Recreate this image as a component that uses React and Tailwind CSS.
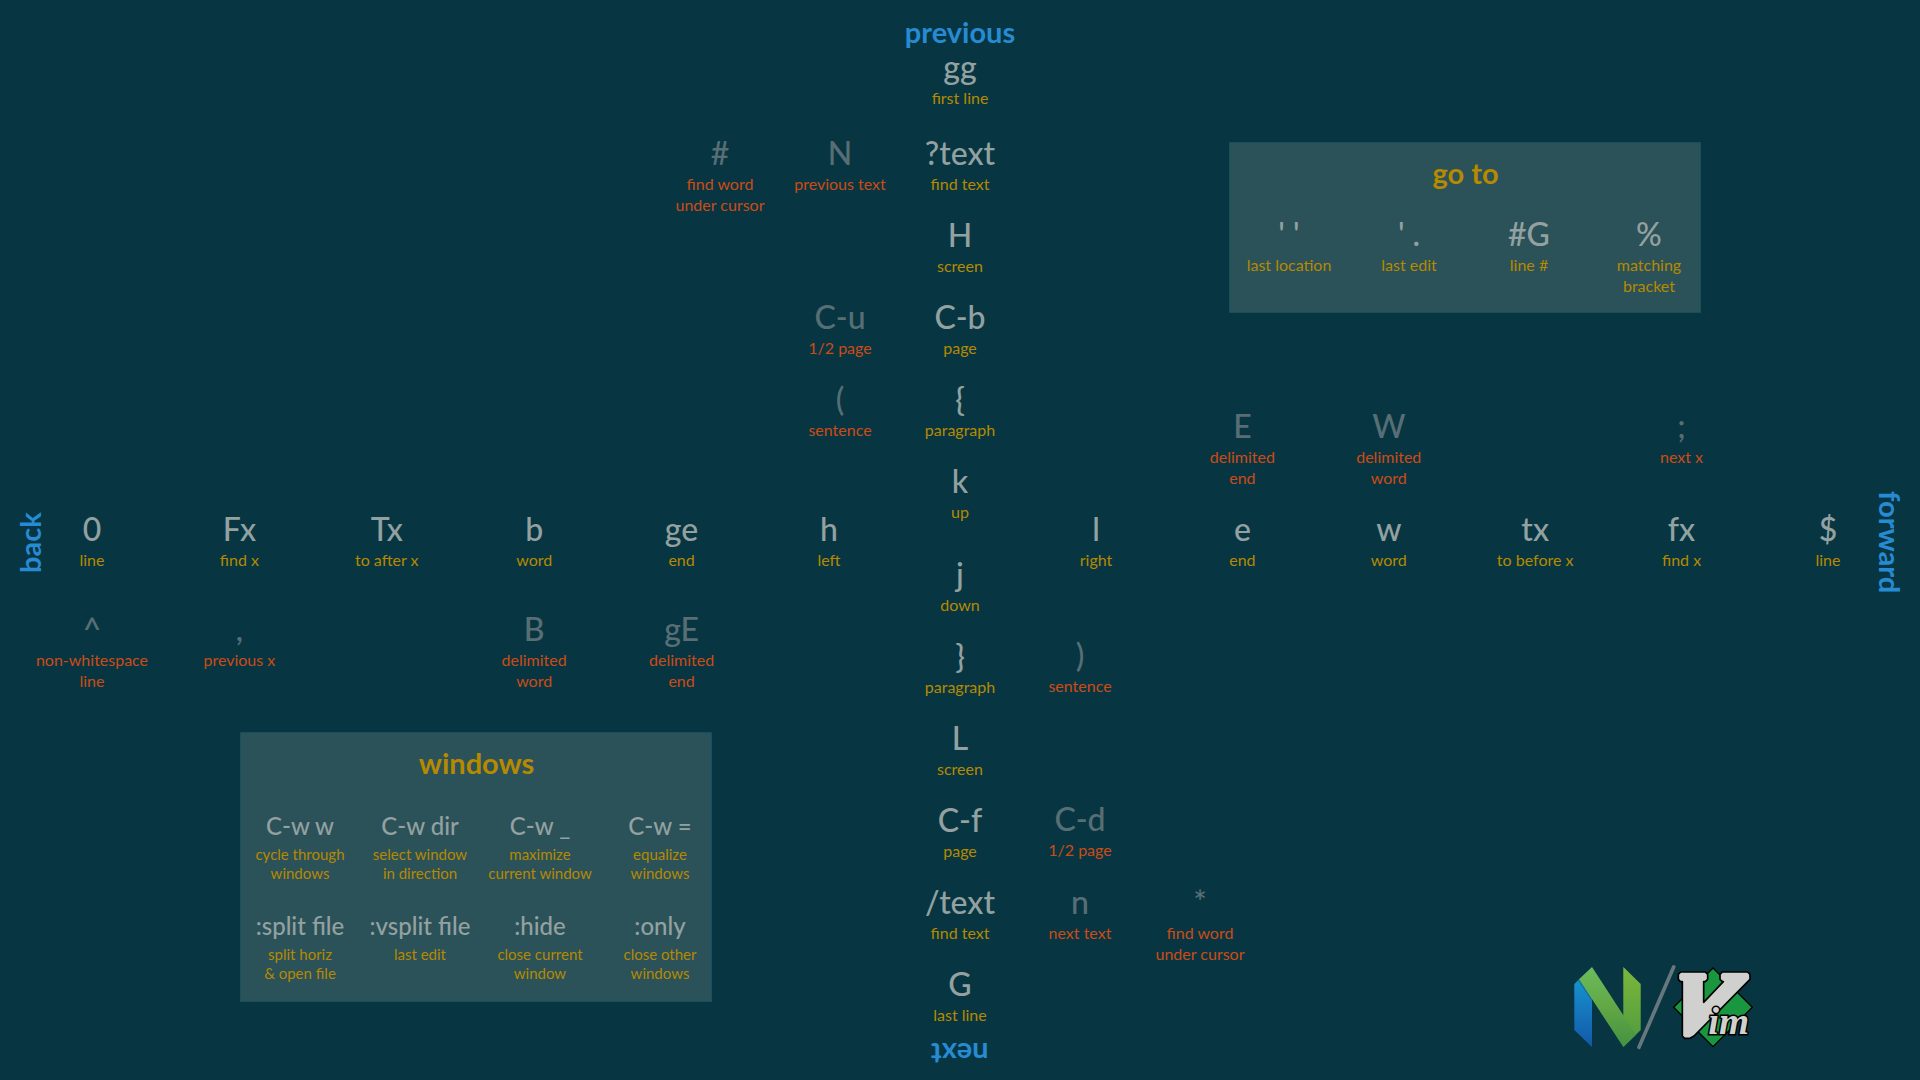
const tones = {
  main: { key: "text-[#93a1a1]", label: "text-[#b58900]" },
  alt: { key: "text-[#586e75]", label: "text-[#cb4b16]" },
};

function Key({ k, label, tone = "main", className = "w-24" }) {
  const t = tones[tone];
  return (
    <div className={`flex shrink-0 flex-col items-center text-center whitespace-pre ${className}`}>
      <kbd className={`font-[Lato,sans-serif] text-[32px] leading-[40px] font-medium ${t.key}`}>{k}</kbd>
      <span className={`text-[16px] leading-[21px] ${t.label}`}>{label}</span>
    </div>
  );
}

function SmallKey({ k, label }) {
  return (
    <div className="flex w-[100px] shrink-0 flex-col items-center text-center whitespace-pre">
      <kbd className="font-[Lato,sans-serif] text-[24px] leading-[38px] font-medium text-[#93a1a1]">{k}</kbd>
      <span className="text-[15px] leading-[19px] text-[#b58900]">{label}</span>
    </div>
  );
}

function Gap() {
  return <div className="w-24 shrink-0" />;
}

const center = {
  up: [
    ["?text", "find text"],
    ["H", "screen"],
    ["C-b", "page"],
    ["{", "paragraph"],
    ["k", "up"],
  ],
  down: [
    ["j", "down"],
    ["}", "paragraph"],
    ["L", "screen"],
    ["C-f", "page"],
    ["/text", "find text"],
    ["G", "last line"],
  ],
};

const backMain = [
  ["0", "line"],
  ["Fx", "find x"],
  ["Tx", "to after x"],
  ["b", "word"],
  ["ge", "end"],
  ["h", "left"],
];
const backAlt = [
  ["^", "non-whitespace\nline"],
  [",", "previous x"],
  null,
  ["B", "delimited\nword"],
  ["gE", "delimited\nend"],
  null,
];
const forwardAlt = [
  null,
  ["E", "delimited\nend"],
  ["W", "delimited\nword"],
  null,
  [";", "next x"],
  null,
];
const forwardMain = [
  ["l", "right"],
  ["e", "end"],
  ["w", "word"],
  ["tx", "to before x"],
  ["fx", "find x"],
  ["$", "line"],
];
const windowKeys = [
  ["C-w w", "cycle through\nwindows"],
  ["C-w dir", "select window\nin direction"],
  ["C-w _", "maximize\ncurrent window"],
  ["C-w =", "equalize\nwindows"],
  [":split file", "split horiz\n& open file"],
  [":vsplit file", "last edit"],
  [":hide", "close current\nwindow"],
  [":only", "close other\nwindows"],
];
const gotoKeys = [
  ["' '", "last location"],
  ["' .", "last edit"],
  ["#G", "line #"],
  ["%", "matching\nbracket"],
];

function AxisRow({ items, tone }) {
  return (
    <div className="flex justify-between">
      {items.map((it, i) => (it ? <Key key={i} k={it[0]} label={it[1]} tone={tone} /> : <Gap key={i} />))}
    </div>
  );
}

function Panel({ title, className, children }) {
  return (
    <section className={`w-[472px] border border-[#16505f] bg-[#2c5259] pt-3.5 pl-[9px] ${className}`}>
      <h2 className="pr-2 text-center text-[29px] leading-8 font-bold text-[#b58900]">{title}</h2>
      {children}
    </section>
  );
}

function Logos() {
  return (
    <svg className="h-[85px] w-[180px]" viewBox="39 45 540 255" role="img" aria-label="Neovim and Vim">
      <defs>
        <linearGradient id="blue" x1="0" y1="0" x2="0" y2="1">
          <stop offset="0" stopColor="#1693cf" />
          <stop offset="1" stopColor="#1358a8" />
        </linearGradient>
        <linearGradient id="right" x1="0" y1="0" x2="0" y2="1">
          <stop offset="0" stopColor="#7db73c" />
          <stop offset="1" stopColor="#439240" />
        </linearGradient>
        <linearGradient id="diag" x1="0" y1="0" x2="0" y2="1">
          <stop offset="0" stopColor="#6cbb5d" />
          <stop offset="0.5" stopColor="#62a746" />
          <stop offset="1" stopColor="#439240" />
        </linearGradient>
      </defs>
      <path d="M43 102 58 87 96 144V291L43 240Z" fill="url(#blue)" />
      <path d="M58 87 96 144V154L54 91Z" fill="#0d5a85" opacity="0.6" />
      <path d="M190 51 242 102V240L190 291Z" fill="url(#right)" />
      <path d="M96 51 228 254 190 291 57 88Z" fill="url(#diag)" />
      <path d="M190 196 228 254 242 240V102L190 51Z" fill="#7db73c" opacity="0.2" />
      <path d="M341 51 237 292" stroke="#66787d" strokeWidth="11" strokeLinecap="round" />
      <path d="M459 54 577 172 459 290 341 172Z" fill="#1b9640" stroke="#000" strokeWidth="4" />
      <path
        d="M362 66H436L443 73V88L436 95H431V157L490 95H487L480 88V73L487 66H563L570 73V88L402 258 390 265H374L367 258V95H361L355 88V73Z"
        fill="#d0d0ce"
        stroke="#000"
        strokeWidth="5"
        strokeLinejoin="round"
      />
      <text
        x="445"
        y="252"
        className="font-['Liberation_Serif',serif] text-[116px] font-bold italic"
        fill="#d0d0ce"
        stroke="#000"
        strokeWidth="9"
        paintOrder="stroke"
      >
        im
      </text>
    </svg>
  );
}

export default function App() {
  return (
    <main className="grid min-h-screen grid-cols-[1fr_120px_1fr] overflow-hidden bg-[#073642] font-[Lato,sans-serif]">
      <div className="flex min-w-0 flex-col">
        <div className="flex justify-end pt-[133px]">
          <Key k="#" label={"find word\nunder cursor"} tone="alt" className="w-[120px]" />
          <Key k="N" label="previous text" tone="alt" className="w-[120px]" />
        </div>
        <div className="flex flex-col items-end gap-[21px] pt-[82px]">
          <Key k="C-u" label="1/2 page" tone="alt" className="w-[120px]" />
          <Key k="(" label="sentence" tone="alt" className="w-[120px]" />
        </div>
        <div className="mt-[69px] flex gap-0.5 pr-[23px] pl-[18px]">
          <h2 className="w-6 rotate-180 pb-[3px] text-right text-[29px] leading-6 font-bold text-[#268bd2] [writing-mode:vertical-rl]">
            back
          </h2>
          <div className="flex flex-1 flex-col gap-[39px]">
            <AxisRow items={backMain} tone="main" />
            <AxisRow items={backAlt} tone="alt" />
          </div>
        </div>
        <Panel title="windows" className="mt-[41px] ml-60 pb-[18px]">
          <div className="grid grid-cols-[repeat(4,100px)] gap-x-5 gap-y-6 pt-7">
            {windowKeys.map(([k, l]) => (
              <SmallKey key={k} k={k} label={l} />
            ))}
          </div>
        </Panel>
      </div>

      <div className="flex flex-col items-center">
        <h2 className="mb-[5px] pt-[22px] text-[29px] leading-5 font-bold text-[#268bd2]">previous</h2>
        <Key k="gg" label="first line" />
        <div className="flex flex-col gap-[21px] pt-[25px]">
          {center.up.map(([k, l]) => (
            <Key key={k} k={k} label={l} />
          ))}
        </div>
        <div className="flex flex-col gap-[21px] pt-8">
          {center.down.map(([k, l]) => (
            <Key key={k} k={k} label={l} />
          ))}
        </div>
        <h2 className="mt-[19px] rotate-180 text-[29px] leading-5 font-bold text-[#268bd2]">next</h2>
      </div>

      <div className="flex min-w-0 flex-col">
        <Panel title="go to" className="mt-[142px] ml-[209px] pb-4">
          <div className="grid grid-cols-[repeat(4,100px)] gap-x-5 pt-[25px]">
            {gotoKeys.map(([k, l]) => (
              <Key key={k} k={k} label={l} className="w-[100px]" />
            ))}
          </div>
        </Panel>
        <div className="mt-[93px] flex gap-0.5 pr-[18px] pl-7">
          <div className="flex flex-1 flex-col gap-[21px]">
            <AxisRow items={forwardAlt} tone="alt" />
            <AxisRow items={forwardMain} tone="main" />
          </div>
          <h2 className="w-6 pt-[85px] text-[29px] leading-6 font-bold text-[#268bd2] [writing-mode:vertical-rl]">
            forward
          </h2>
        </div>
        <div className="mt-[42px] flex justify-between">
          <div className="flex flex-col">
            <Key k=")" label="sentence" tone="alt" className="w-[120px]" />
            <div className="flex flex-col gap-[22px] pt-[103px]">
              <Key k="C-d" label="1/2 page" tone="alt" className="w-[120px]" />
              <div className="flex">
                <Key k="n" label="next text" tone="alt" className="w-[120px]" />
                <Key k="*" label={"find word\nunder cursor"} tone="alt" className="w-[120px]" />
              </div>
            </div>
          </div>
          <div className="mr-[167px] pt-[330px]">
            <Logos />
          </div>
        </div>
      </div>
    </main>
  );
}
